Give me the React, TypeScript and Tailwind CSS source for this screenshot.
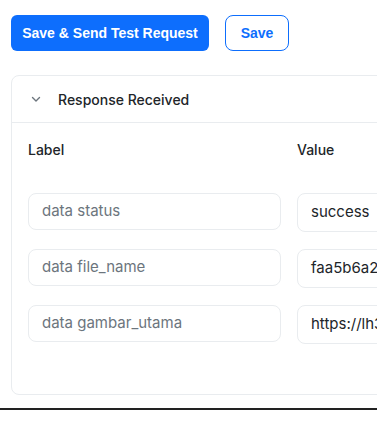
import React from "react";

const rows = [
  { label: "data status", value: "success" },
  { label: "data file_name", value: "faa5b6a2c1d9e8f7.jpg" },
  { label: "data gambar_utama", value: "https://lh3.googleusercontent.com/abc" },
];

export default function App() {
  return (
    <div className="w-[377px] h-[430px] overflow-hidden bg-white" style={{ fontFamily: "Inter, 'Noto Sans', sans-serif" }}>
      <div className="w-[377px]">
        <div className="flex gap-4 pl-[11px] pt-[15px]">
          <button
            className="h-9 w-[198px] rounded-md bg-[#0d6efd] text-white text-[14px] font-bold"
            style={{ fontFamily: "'Liberation Sans', Arial, sans-serif" }}
          >
            Save &amp; Send Test Request
          </button>
          <button
            className="h-9 w-16 rounded-lg border border-[#0d6efd] bg-white text-[#0d6efd] text-[14px] font-bold"
            style={{ fontFamily: "'Liberation Sans', Arial, sans-serif" }}
          >
            Save
          </button>
        </div>
        <div className="ml-[11px] mt-6 w-[600px] rounded-lg border border-[#e9ecef] text-[#212529]">
          <div className="flex h-[47px] items-center border-b border-[#e9ecef] pl-[18px]">
            <svg width="12" height="12" viewBox="0 0 12 12" fill="none" className="text-[#6c757d]">
              <path d="M2.5 4.5 L6 8 L9.5 4.5" stroke="currentColor" strokeWidth="1.4" strokeLinecap="round" strokeLinejoin="round" />
            </svg>
            <span className="ml-[16px] text-[14px] font-medium">Response Received</span>
          </div>
          <div className="px-4 pt-[16px] pb-[50px]">
            <div className="flex gap-4 text-[14px] font-medium">
              <div className="w-[253px]">Label</div>
              <div className="w-[253px]">Value</div>
            </div>
            <div className="mt-[33px] flex flex-col gap-[17px]">
              {rows.map((r) => (
                <div key={r.label} className="flex gap-4 items-start">
                  <div className="flex h-[37px] w-[253px] items-center rounded-lg border border-[#e9ecef] px-[13px] text-[15px] text-[#6c757d]">
                    {r.label}
                  </div>
                  <div className="flex h-[39px] w-[253px] items-center rounded-lg border border-[#e9ecef] px-[13px] text-[15px] text-[#212529] whitespace-nowrap overflow-hidden">
                    {r.value}
                  </div>
                </div>
              ))}
            </div>
          </div>
        </div>
        <div className="mt-[13px] h-[2px] w-full bg-[#222]" />
      </div>
    </div>
  );
}
